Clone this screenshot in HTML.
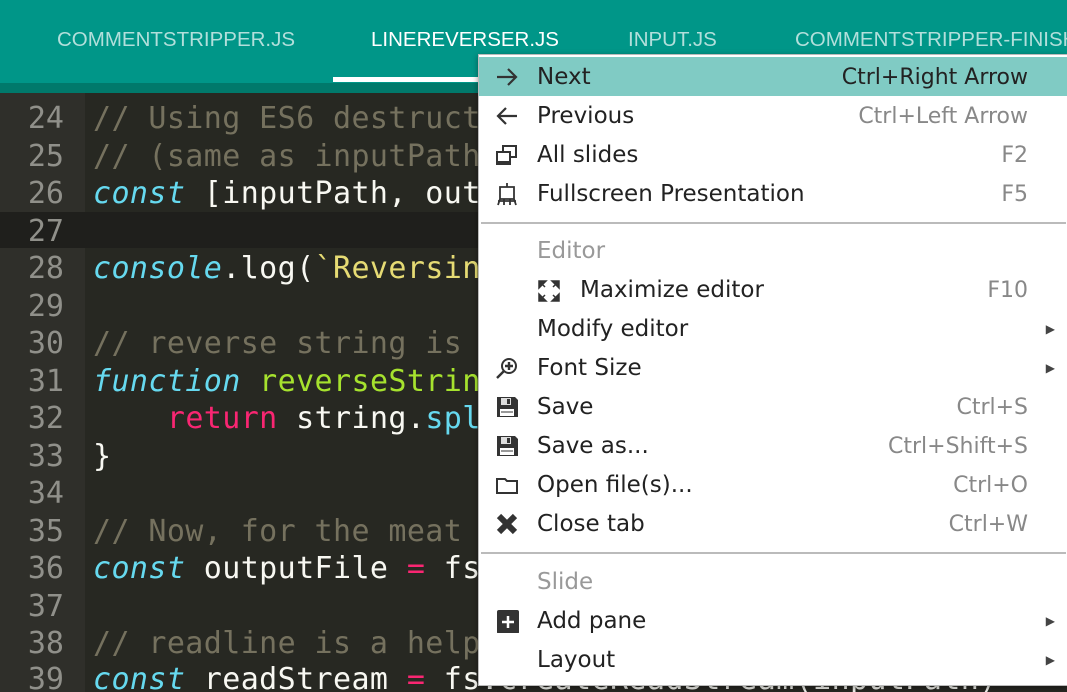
<!DOCTYPE html><html><head><style>
*{margin:0;padding:0;box-sizing:border-box}
html,body{width:1067px;height:692px;overflow:hidden}
body{background:#272822;position:relative;font-family:"DejaVu Sans","Liberation Sans",sans-serif}
.wrap{position:absolute;left:0;top:0;width:1067px;height:692px;overflow:hidden}
.top{position:absolute;left:0;top:0;width:1067px;height:83px;background:#009688}
.strip{position:absolute;left:0;top:83px;width:1067px;height:10px;background:#00796b}
.tab{position:absolute;top:28px;font-family:"Liberation Sans",sans-serif;font-size:20.5px;color:#b2dfdb;white-space:nowrap}
.ul{position:absolute;left:333px;top:77px;width:260px;height:5px;background:#fff}
.gut{position:absolute;left:0;top:93px;width:85px;height:599px;background:#2f2f2a}
.hl{position:absolute;left:0;top:212px;width:1067px;height:36px;background:#1f1f1c}
.ln{position:absolute;left:0;width:64px;text-align:right;font-family:"DejaVu Sans Mono",monospace;font-size:30px;color:#90908a;line-height:37.5px}
.cl{position:absolute;left:93px;font-family:"DejaVu Sans Mono",monospace;font-size:30px;letter-spacing:0.4px;color:#f8f8f2;line-height:37.5px;white-space:pre}
.c{color:#75715e}.k{color:#66d9ef;font-style:italic}.s{color:#e6db74}.r{color:#f92672}.f{color:#a6e22e}.b{color:#66d9ef}
.menu{position:absolute;left:478px;top:54px;width:589px;height:632px;background:#fff;border:1px solid #bbb;border-right:none;box-shadow:0 2px 6px rgba(0,0,0,.4)}
.it{position:absolute;left:0;width:588px;height:39px;font-size:23px;color:#222;line-height:41px}
.it .t{position:absolute;left:58px}
.it .k2{position:absolute;right:39px;color:#888;font-size:22px}
.it .ar{position:absolute;right:12px;font-size:12px;color:#444}
.it .ic{position:absolute;left:16px;top:8px;width:24px;height:24px}
.sel{background:#80cbc4}
.sel .k2{color:#222}
.sep{position:absolute;left:2px;width:585px;height:2px;background:#bbb}
.hd{color:#999}
</style></head><body><div class="wrap">
<div class="top"></div><div class="strip"></div>
<div class="tab" style="left:57px">COMMENTSTRIPPER.JS</div>
<div class="tab" style="left:371px;color:#fff">LINEREVERSER.JS</div>
<div class="tab" style="left:628px">INPUT.JS</div>
<div class="tab" style="left:795px">COMMENTSTRIPPER-FINISHED.JS</div>
<div class="ul"></div>
<div class="gut"></div>
<div class="hl"></div>
<div class="ln" style="top:100px">24</div><div class="cl" style="top:100px"><span class="c">// Using ES6 destructuring</span></div>
<div class="ln" style="top:137.5px">25</div><div class="cl" style="top:137.5px"><span class="c">// (same as inputPath = ...</span></div>
<div class="ln" style="top:175px">26</div><div class="cl" style="top:175px"><span class="k">const</span> [inputPath, outputPath]</div>
<div class="ln" style="top:212.5px">27</div>
<div class="ln" style="top:250px">28</div><div class="cl" style="top:250px"><span class="k">console</span>.log(<span class="s">`Reversing</span></div>
<div class="ln" style="top:287.5px">29</div>
<div class="ln" style="top:325px">30</div><div class="cl" style="top:325px"><span class="c">// reverse string is</span></div>
<div class="ln" style="top:362.5px">31</div><div class="cl" style="top:362.5px"><span class="k">function</span> <span class="f">reverseString</span></div>
<div class="ln" style="top:400px">32</div><div class="cl" style="top:400px">    <span class="r">return</span> string.<span class="b">split</span></div>
<div class="ln" style="top:437.5px">33</div><div class="cl" style="top:437.5px">}</div>
<div class="ln" style="top:475px">34</div>
<div class="ln" style="top:512.5px">35</div><div class="cl" style="top:512.5px"><span class="c">// Now, for the meat</span></div>
<div class="ln" style="top:550px">36</div><div class="cl" style="top:550px"><span class="k">const</span> outputFile <span class="r">=</span> fs.create</div>
<div class="ln" style="top:587.5px">37</div>
<div class="ln" style="top:625px">38</div><div class="cl" style="top:625px"><span class="c">// readline is a helper</span></div>
<div class="ln" style="top:654px;height:38px;overflow:hidden;line-height:52px">39</div><div class="cl" style="top:654px;height:38px;overflow:hidden;line-height:52px"><span class="k">const</span> readStream <span class="r">=</span> fs.createReadStream(inputPath)</div>

<div class="menu">
<div class="it sel" style="top:2px"><svg class="ic" viewBox="0 0 24 24"><path d="M2 12H21M13 4l8 8-8 8" stroke="#333" stroke-width="2.2" fill="none"/></svg><span class="t">Next</span><span class="k2">Ctrl+Right Arrow</span></div>
<div class="it" style="top:41px"><svg class="ic" viewBox="0 0 24 24"><path d="M22 12H3M11 4l-8 8 8 8" stroke="#333" stroke-width="2.2" fill="none"/></svg><span class="t">Previous</span><span class="k2">Ctrl+Left Arrow</span></div>
<div class="it" style="top:80px"><svg class="ic" viewBox="0 0 24 24"><rect x="8" y="3" width="13" height="11" stroke="#333" stroke-width="2" fill="none"/><rect x="2" y="9" width="13" height="12" fill="#fff" stroke="#333" stroke-width="2"/><rect x="2" y="18" width="13" height="3" fill="#333"/></svg><span class="t">All slides</span><span class="k2">F2</span></div>
<div class="it" style="top:119px"><svg class="ic" viewBox="0 0 24 24"><path d="M12 1v4M5 5h14v12H5zM5 17l-2 6M19 17l2 6M9 17v6M15 17v6M3 19h18" stroke="#333" stroke-width="1.8" fill="none"/></svg><span class="t">Fullscreen Presentation</span><span class="k2">F5</span></div>
<div class="sep" style="top:167px"></div>
<div class="it" style="top:176px"><span class="t hd">Editor</span></div>
<div class="it" style="top:215px"><svg style="position:absolute;left:58px;top:9px;width:24px;height:24px" viewBox="0 0 24 24"><path d="M2 2h7L2 9zM3 3l5 5M22 2h-7l7 7zM21 3l-5 5M2 22h7l-7-7zM3 21l5-5M22 22h-7l7-7zM21 21l-5-5" fill="#333" stroke="#333" stroke-width="1.5"/></svg><span class="t" style="left:101px">Maximize editor</span><span class="k2">F10</span></div>
<div class="it" style="top:254px"><span class="t">Modify editor</span><span class="ar">▶</span></div>
<div class="it" style="top:293px"><svg class="ic" viewBox="0 0 24 24"><circle cx="14" cy="10" r="7" stroke="#333" stroke-width="2" fill="none"/><path d="M9 15l-7 7M14 6v8M10 10h8" stroke="#333" stroke-width="2.4"/></svg><span class="t">Font Size</span><span class="ar">▶</span></div>
<div class="it" style="top:332px"><svg class="ic" viewBox="0 0 24 24"><path d="M2 2h18l3 3v17H2z" fill="#333"/><rect x="6" y="3" width="10" height="7" fill="#ddd"/><rect x="12" y="4" width="3" height="5" fill="#333"/><rect x="5" y="14" width="14" height="7" fill="#fff"/><path d="M6 17h12" stroke="#333"/></svg><span class="t">Save</span><span class="k2">Ctrl+S</span></div>
<div class="it" style="top:371px"><svg class="ic" viewBox="0 0 24 24"><path d="M2 2h18l3 3v17H2z" fill="#333"/><rect x="6" y="3" width="10" height="7" fill="#ddd"/><rect x="12" y="4" width="3" height="5" fill="#333"/><rect x="5" y="14" width="14" height="7" fill="#fff"/><path d="M6 17h12" stroke="#333"/></svg><span class="t">Save as...</span><span class="k2">Ctrl+Shift+S</span></div>
<div class="it" style="top:410px"><svg class="ic" viewBox="0 0 24 24"><path d="M2 6h8l2 2h10v12H2z" stroke="#333" stroke-width="2" fill="none"/></svg><span class="t">Open file(s)...</span><span class="k2">Ctrl+O</span></div>
<div class="it" style="top:449px"><svg class="ic" viewBox="0 0 24 24"><path d="M4 4L20 20M20 4L4 20" stroke="#333" stroke-width="6"/></svg><span class="t">Close tab</span><span class="k2">Ctrl+W</span></div>
<div class="sep" style="top:497px"></div>
<div class="it" style="top:507px"><span class="t hd">Slide</span></div>
<div class="it" style="top:546px"><svg class="ic" viewBox="0 0 24 24"><rect x="2" y="1" width="22" height="24" rx="2" fill="#333"/><path d="M13 7v12M7 13h12" stroke="#fff" stroke-width="2.5"/></svg><span class="t">Add pane</span><span class="ar">▶</span></div>
<div class="it" style="top:585px"><span class="t">Layout</span><span class="ar">▶</span></div>
</div>
</div></body></html>
